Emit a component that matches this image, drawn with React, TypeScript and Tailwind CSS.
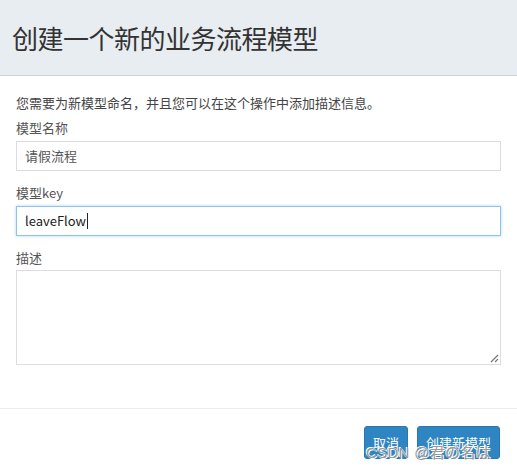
export default function App() {
  return (
    <div
      className="relative w-[517px] h-[472px] bg-white overflow-hidden text-[#555]"
      style={{ fontFamily: '"Noto Sans CJK SC", "Noto Sans", sans-serif' }}
    >
      <div className="h-[76px] bg-[#e8edf1] border-b border-[#c9d0d6] flex items-center pl-3">
        <h1 className="text-[26px] leading-none text-[#333] font-normal tracking-[-0.5px]">创建一个新的业务流程模型</h1>
      </div>

      <div className="px-4 pt-[18px]">
        <p className="text-[13px] leading-[18px] text-[#444]">您需要为新模型命名，并且您可以在这个操作中添加描述信息。</p>

        <label className="block mt-[7px] text-[13px] leading-[18px]">模型名称</label>
        <div className="mt-[4px] h-[30px] w-[485px] border border-[#ddd] flex items-center pl-2 text-[13px] text-[#555]">
          请假流程
        </div>

        <label className="block mt-[13px] text-[13px] leading-[18px]">模型key</label>
        <div className="mt-[4px] h-[30px] w-[485px] border border-[#8cc4ef] shadow-[0_0_3px_rgba(102,175,233,0.5)] flex items-center pl-2 text-[13px] text-[#222]">
          leaveFlow<span className="w-px h-[16px] bg-[#222] ml-px" />
        </div>

        <label className="block mt-[13px] text-[13px] leading-[18px]">描述</label>
        <div className="relative mt-[3px] h-[95px] w-[485px] border border-[#ddd]">
          <svg className="absolute right-[1px] bottom-[1px]" width="9" height="9" viewBox="0 0 9 9">
            <path d="M8 1L1 8M8 5L5 8" stroke="#777" strokeWidth="1.2" />
          </svg>
        </div>
      </div>

      <div className="mt-[43px] border-t border-[#eee]" />

      <div className="flex justify-end gap-[9px] pr-[17px] pt-[17px]">
        <button className="h-[33px] px-[8px] rounded-[3px] bg-[#2f85c2] border border-[#2a78b0] text-white text-[13px]">取消</button>
        <button className="h-[33px] px-[8px] rounded-[3px] bg-[#2f85c2] border border-[#2a78b0] text-white text-[13px]">创建新模型</button>
      </div>

      <div
        className="absolute left-[366px] top-[445px] text-[15px] leading-none text-[#9a9a9a] tracking-[0.3px] [text-shadow:1px_1px_0_#fff,-1px_-1px_0_#fff]"
        style={{ fontFamily: '"Liberation Sans", "Noto Sans CJK JP", sans-serif' }}
      >
        CSDN @君の名は
      </div>
    </div>
  );
}
